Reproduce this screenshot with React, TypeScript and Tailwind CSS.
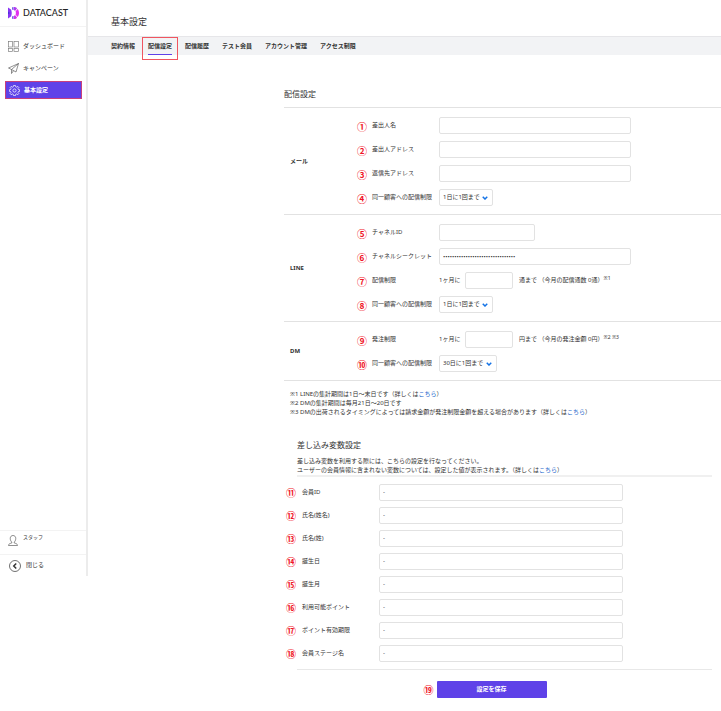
import React from 'react';

const tabs = ['契約情報', '配信設定', '配信履歴', 'テスト会員', 'アカウント管理', 'アクセス制限'];

const variables = [
  { mark: '⑪', label: '会員ID' },
  { mark: '⑫', label: '氏名(姓名)' },
  { mark: '⑬', label: '氏名(姓)' },
  { mark: '⑭', label: '誕生日' },
  { mark: '⑮', label: '誕生月' },
  { mark: '⑯', label: '利用可能ポイント' },
  { mark: '⑰', label: 'ポイント有効期限' },
  { mark: '⑱', label: '会員ステージ名' },
];

const inputClass =
  'h-[17px] rounded-[2px] border border-[#e2e2e2] bg-white text-[6px] leading-[9px] text-[#333] outline-none';

const Logo = () => (
  <svg viewBox="0 0 22 24" className="h-3 w-[11px] shrink-0">
    <path d="M0 1 L6 5 C8 9 8 15 6 19 L0 23 Z" fill="#8a35f5" />
    <path d="M0 9 L4 12 L0 15 Z" fill="#4b35d8" />
    <path d="M8 1 L11 0 V6 L9 6 Z M8 23 L11 24 V18 L9 18 Z" fill="#5a35e0" />
    <path d="M12 0 C15 0 17 1 18 3 L14 8 L12 6 Z" fill="#b13cf0" />
    <path d="M12 24 C15 24 17 23 18 21 L14 16 L12 18 Z" fill="#d431e8" />
    <path d="M19 4 C23 8 23 16 19 20 L15 15 C16 13 16 11 15 9 Z" fill="#e22ef0" />
  </svg>
);

const DashboardIcon = () => (
  <svg viewBox="0 0 22 22" className="h-[11px] w-[11px] shrink-0" fill="none" stroke="#777" strokeWidth="1.3">
    <rect x="1" y="1" width="8" height="11" />
    <rect x="12" y="1" width="9" height="11" />
    <rect x="1" y="15" width="8" height="6" />
    <rect x="12" y="15" width="9" height="6" />
  </svg>
);

const SendIcon = () => (
  <svg
    viewBox="0 0 22 22"
    className="h-[11px] w-[11px] shrink-0"
    fill="none"
    stroke="#555"
    strokeWidth="1.3"
    strokeLinejoin="round"
  >
    <path d="M21 1 L1 10 L7 13 L16 18 Z" />
    <path d="M21 1 L7 13 V21 L11 15.500" />
  </svg>
);

const GearIcon = () => (
  <svg
    viewBox="0 0 24 24"
    className="h-[11px] w-[11px] shrink-0"
    fill="none"
    stroke="currentColor"
    strokeWidth="1.6"
    strokeLinejoin="round"
  >
    <path d="M10 1h4l.7 3 2 .8L19.400 3.200 21.500 5.300 19.600 7.800l.8 2 2.800.5v3.600l-2.800.5-.8 2 1.900 2.400-2.300 2.300-2.500-1.700-2 .8-.7 3h-4l-.7-3-2-.8-2.500 1.700-2.300-2.300 1.900-2.400-.8-2L.8 13.900v-3.600l2.800-.5.8-2L2.500 5.300 4.600 3.200l2.700 1.600 2-.8z" />
    <circle cx="12" cy="12" r="3.500" />
  </svg>
);

const PersonIcon = () => (
  <svg viewBox="0 0 20 22" className="h-[11px] w-[10px] shrink-0" fill="none" stroke="#555" strokeWidth="1.3">
    <path d="M7.500 14 C5 12 4.500 9 4.500 6.500 C4.500 3 7 1 10 1 C13 1 15.500 3 15.500 6.500 C15.500 9 15 12 12.500 14 V16 C15 17 19 17 19 21 H1 C1 17 5 17 7.500 16 Z" />
  </svg>
);

const CloseIcon = () => (
  <svg viewBox="0 0 24 24" className="h-3 w-3 shrink-0" fill="none" stroke="#333">
    <circle cx="12" cy="12" r="11" strokeWidth="1.4" />
    <path d="M14.500 7 L9.500 12 L14.500 17" strokeWidth="3" />
  </svg>
);

const Mark = ({ children }: { children: React.ReactNode }) => (
  <span className="shrink-0 text-[10px] leading-[10px] font-bold text-[#f01427]">{children}</span>
);

type RowProps = {
  mark: string;
  label: string;
  id: string;
  children: React.ReactNode;
};

const Row = ({ mark, label, id, children }: RowProps) => (
  <div className="flex h-[17px] items-center">
    <div className="flex w-[15px] shrink-0 pt-[2px]">
      <Mark>{mark}</Mark>
    </div>
    <label htmlFor={id} className="w-[67px] shrink-0">
      {label}
    </label>
    {children}
  </div>
);

const Group = ({ title, children }: { title: string; children: React.ReactNode }) => (
  <div className="flex items-center border-t border-[#e2e2e2] pt-[9px] pb-2">
    <h3 className="w-[73px] shrink-0 pl-[6px] font-bold">{title}</h3>
    <div className="flex grow flex-col gap-[7px]">{children}</div>
  </div>
);

const Select = ({ id, options }: { id: string; options: string[] }) => (
  <div className="relative">
    <select id={id} className={`${inputClass} appearance-none pr-3 pl-[3px]`}>
      {options.map((option) => (
        <option key={option}>{option}</option>
      ))}
    </select>
    <svg
      viewBox="0 0 12 8"
      className="pointer-events-none absolute top-[7px] right-[5px] h-1 w-[6px]"
      fill="none"
      stroke="#1473e6"
      strokeWidth="3"
    >
      <path d="M1.500 1.500 L6 6 L10.500 1.500" />
    </svg>
  </div>
);

const Sidebar = () => (
  <aside className="flex min-h-[576px] w-[88px] shrink-0 flex-col self-start border-r-2 border-[#ececec]">
    <a href="#" className="flex h-[27px] items-center gap-1 border-b border-[#f3f3f3] pl-2">
      <Logo />
      <span className="font-[Lato,sans-serif] text-[9px] leading-3 font-medium text-[#222]">DATACAST</span>
    </a>
    <nav className="flex flex-col gap-1 px-[5px] pt-[10px]">
      <a href="#" className="flex h-[18px] items-center gap-1 pl-[3px]">
        <DashboardIcon />
        ダッシュボード
      </a>
      <a href="#" className="flex h-[18px] items-center gap-1 pl-[3px]">
        <SendIcon />
        キャンペーン
      </a>
      <a
        href="#"
        className="flex h-[18px] w-[77px] items-center gap-1 border border-[#c8407c] bg-[#5f42e8] pl-[3px] font-bold text-white"
      >
        <GearIcon />
        基本設定
      </a>
    </nav>
    <div className="mt-auto flex h-6 gap-[5px] border-t border-[#f3f3f3] pt-[3px] pl-2">
      <span className="pt-px">
        <PersonIcon />
      </span>
      <span className="text-[5px] leading-[6px]">スタッフ</span>
    </div>
    <button className="flex h-[22px] items-center gap-[5px] border-t border-[#f3f3f3] pl-[9px]">
      <CloseIcon />
      閉じる
    </button>
  </aside>
);

const Tabs = () => (
  <nav className="flex h-[19px] items-center gap-[13px] border-t border-[#e6e6e9] bg-[#f2f3f5] pl-[23px] font-bold">
    {tabs.map((tab) =>
      tab === '配信設定' ? (
        <a key={tab} href="#" aria-current="page" className="relative whitespace-nowrap">
          {tab}
          <span className="absolute inset-x-0 top-3 h-px bg-[#5f42e8]" />
          <span className="absolute -inset-x-[6px] -top-[5px] h-[23px] border border-[#f05560]" />
        </a>
      ) : (
        <a key={tab} href="#" className="whitespace-nowrap">
          {tab}
        </a>
      ),
    )}
  </nav>
);

const DeliverySettings = () => (
  <section>
    <h2 className="pb-[7px] text-[8px] leading-3">配信設定</h2>
    <Group title="メール">
      <Row mark="①" label="差出人名" id="sender-name">
        <input id="sender-name" className={`${inputClass} w-48 px-[3px]`} />
      </Row>
      <Row mark="②" label="差出人アドレス" id="sender-address">
        <input id="sender-address" className={`${inputClass} w-48 px-[3px]`} />
      </Row>
      <Row mark="③" label="返信先アドレス" id="reply-address">
        <input id="reply-address" className={`${inputClass} w-48 px-[3px]`} />
      </Row>
      <Row mark="④" label="同一顧客への配信制限" id="mail-limit">
        <Select id="mail-limit" options={['1日に1回まで']} />
      </Row>
    </Group>
    <Group title="LINE">
      <Row mark="⑤" label="チャネルID" id="channel-id">
        <input id="channel-id" className={`${inputClass} w-24 px-[3px]`} />
      </Row>
      <Row mark="⑥" label="チャネルシークレット" id="channel-secret">
        <input
          id="channel-secret"
          type="password"
          defaultValue="0123456789abcdef0123456789abcdef"
          className={`${inputClass} w-48 px-[3px]`}
        />
      </Row>
      <Row mark="⑦" label="配信制限" id="line-count">
        <span className="w-[26px]">1ヶ月に</span>
        <input id="line-count" className={`${inputClass} mr-[6px] w-12 px-[3px]`} />
        <span>通まで （今月の配信通数 0通）</span>
        <span className="self-start text-[5px] leading-[12px]">※1</span>
      </Row>
      <Row mark="⑧" label="同一顧客への配信制限" id="line-limit">
        <Select id="line-limit" options={['1日に1回まで']} />
      </Row>
    </Group>
    <Group title="DM">
      <Row mark="⑨" label="発注制限" id="dm-amount">
        <span className="w-[26px]">1ヶ月に</span>
        <input id="dm-amount" className={`${inputClass} mr-[6px] w-12 px-[3px]`} />
        <span>円まで （今月の発注金額 0円）</span>
        <span className="self-start text-[5px] leading-[12px]">※2 ※3</span>
      </Row>
      <Row mark="⑩" label="同一顧客への配信制限" id="dm-limit">
        <Select id="dm-limit" options={['30日に1回まで']} />
      </Row>
    </Group>
    <div className="border-t border-[#e2e2e2] pt-[9px] pl-[6px]">
      <p>
        ※1 LINEの集計期間は1日～末日です（詳しくは
        <a href="#" className="text-[#1a66cc]">こちら</a>）
      </p>
      <p>※2 DMの集計期間は毎月21日～20日です</p>
      <p>
        ※3 DMの出荷されるタイミングによっては請求金額が発注制限金額を超える場合があります（詳しくは
        <a href="#" className="text-[#1a66cc]">こちら</a>）
      </p>
    </div>
  </section>
);

const VariableSettings = () => (
  <section className="pt-[22px] pr-[9px]">
    <div className="ml-[13px] border-b-2 border-[#f0f0f0]">
      <h2 className="pb-[6px] text-[8px] leading-3">差し込み変数設定</h2>
      <p>差し込み変数を利用する際には、こちらの設定を行なってください。</p>
      <p>
        ユーザーの会員情報に含まれない変数については、設定した値が表示されます。（詳しくは
        <a href="#" className="text-[#1a66cc]">こちら</a>）
      </p>
    </div>
    <div className="flex flex-col gap-[7px] pt-[7px] pb-2 pl-[2px]">
      {variables.map(({ mark, label }) => (
        <div key={mark} className="flex h-4 items-center">
          <div className="flex w-4 shrink-0 pt-[2px]">
            <Mark>{mark}</Mark>
          </div>
          <label htmlFor={label} className="w-[77px] shrink-0">
            {label}
          </label>
          <input id={label} defaultValue="-" className={`${inputClass} w-[244px] px-[3px]`} />
        </div>
      ))}
    </div>
    <div className="ml-[13px] border-t border-[#e8e8e8]" />
    <div className="flex items-center justify-center gap-[3px] pt-[11px] pr-[26px]">
      <Mark>⑲</Mark>
      <button className="h-[17px] w-[110px] rounded-[1px] bg-[#5f42e8] font-bold text-white">設定を保存</button>
    </div>
  </section>
);

export default function App() {
  return (
    <div
      lang="ja"
      className="flex bg-white font-['Noto_Sans','Noto_Sans_CJK_JP',sans-serif] text-[6px] leading-[9px] text-[#333]"
    >
      <Sidebar />
      <main className="min-w-0 grow">
        <h1 className="pt-[15px] pb-[7px] pl-[23px] text-[9px] leading-[14px]">基本設定</h1>
        <Tabs />
        <div className="pt-[33px] pl-[196px]">
          <DeliverySettings />
          <VariableSettings />
        </div>
      </main>
    </div>
  );
}
